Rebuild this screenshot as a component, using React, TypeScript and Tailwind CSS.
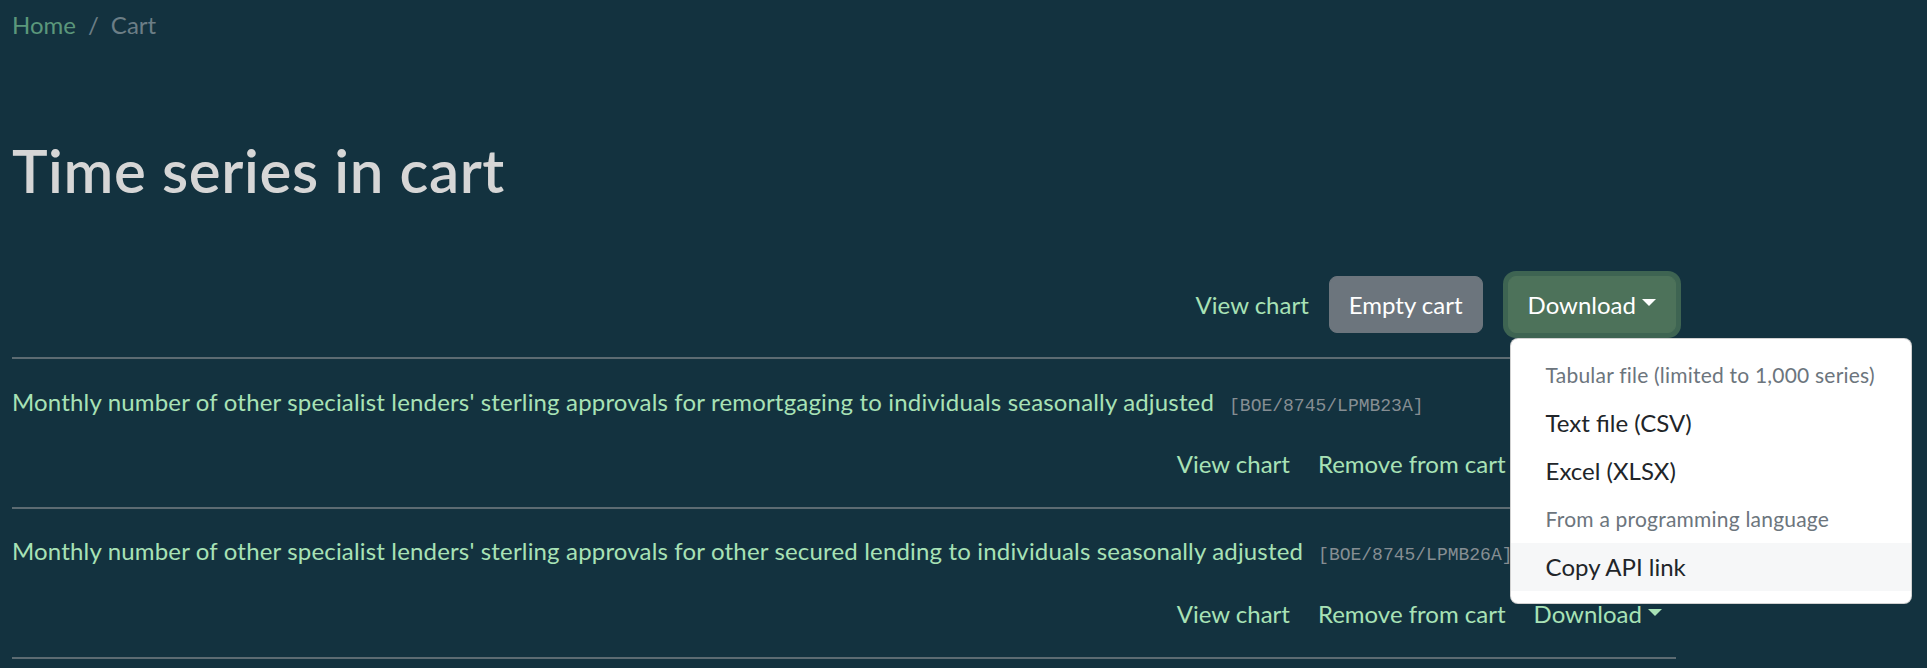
import React from "react";

function Caret({ color }: { color: string }) {
  return (
    <svg width="14" height="7" viewBox="0 0 14 7" className="ml-[6px] mb-[4px] shrink-0">
      <path d="M0 0h14L7 7z" fill={color} />
    </svg>
  );
}

const rows = [
  {
    title:
      "Monthly number of other specialist lenders' sterling approvals for remortgaging to individuals seasonally adjusted",
    code: "[BOE/8745/LPMB23A]",
    titleMt: "mt-[25px]",
    actMt: "mt-[26px]",
  },
  {
    title:
      "Monthly number of other specialist lenders' sterling approvals for other secured lending to individuals seasonally adjusted",
    code: "[BOE/8745/LPMB26A]",
    titleMt: "mt-[24px]",
    actMt: "mt-[27px]",
  },
];

function Menu() {
  return (
    <div className="absolute top-full left-[2px] mt-[5px] w-[402px] z-10 bg-white border border-[rgba(0,0,0,0.18)] rounded-[8px] py-[12px] text-left">
      <div className="px-[35px] py-[8px] text-[21px] leading-[32px] text-[#6c757d] tracking-[0.01em] whitespace-nowrap">
        Tabular file (limited to 1,000 series)
      </div>
      <div className="px-[35px] py-[6px] leading-[36px] text-[#212529] whitespace-nowrap">Text file (CSV)</div>
      <div className="px-[35px] py-[6px] leading-[36px] text-[#212529] whitespace-nowrap">Excel (XLSX)</div>
      <div className="px-[35px] py-[8px] text-[21px] leading-[32px] text-[#6c757d] tracking-[0.01em] whitespace-nowrap">
        From a programming language
      </div>
      <div className="px-[35px] py-[6px] leading-[36px] text-[#212529] bg-[#f6f7f8] whitespace-nowrap">Copy API link</div>
    </div>
  );
}

export default function App() {
  return (
    <div className="min-h-screen w-full bg-[#13323f] font-['Lato',sans-serif] text-[24px] leading-[36px] text-[#d8d8d8]">
      <div className="w-[1664px] ml-[12px] pt-[7px]">
        <nav className="flex items-center leading-[36px]">
          <span className="text-[#5b977b]">Home</span>
          <span className="px-[12px] text-[#6c7e86]">/</span>
          <span className="text-[#6c7e86]">Cart</span>
        </nav>

        <h1 className="mt-[91px] text-[60px] leading-[72px] font-semibold tracking-[0.01em] text-[#d6d6d6]">
          Time series in cart
        </h1>

        <div className="mt-[70px] flex justify-end items-center">
          <span className="text-[#a8e2b6] mr-[20px]">View chart</span>
          <button className="h-[57px] px-[19px] border border-[#6c757d] bg-[#6c757d] rounded-[8px] text-white leading-[36px]">
            Empty cart
          </button>
          <div className="relative ml-[25px]">
            <button className="h-[57px] px-[19px] border border-[#4d725a] bg-[#4d725a] rounded-[8px] text-white leading-[36px] flex items-center shadow-[0_0_0_5px_#3e6452]">
              Download
              <Caret color="#ffffff" />
            </button>
            <Menu />
          </div>
        </div>

        <div className="mt-[24px] h-[2px] bg-[#5c6b72]" />

        {rows.map((r, i) => (
          <div key={i}>
            <div
              className={`${r.titleMt} h-[36px] flex items-baseline gap-[15px] text-[#a8e2b6] whitespace-nowrap`}
            >
              <span className="tracking-[0.007em]">{r.title}</span>
              <span className="font-['Liberation_Mono',monospace] text-[18px] leading-[20px] text-[#868e93]">
                {r.code}
              </span>
            </div>
            <div className={`${r.actMt} h-[36px] flex justify-end items-center gap-[28px] pr-[14px] text-[#a8e2b6]`}>
              <span>View chart</span>
              <span>Remove from cart</span>
              <span className="flex items-center">
                Download
                <Caret color="#a8e2b6" />
              </span>
            </div>
            <div className="mt-[25px] h-[2px] bg-[#5c6b72]" />
          </div>
        ))}
      </div>
    </div>
  );
}
